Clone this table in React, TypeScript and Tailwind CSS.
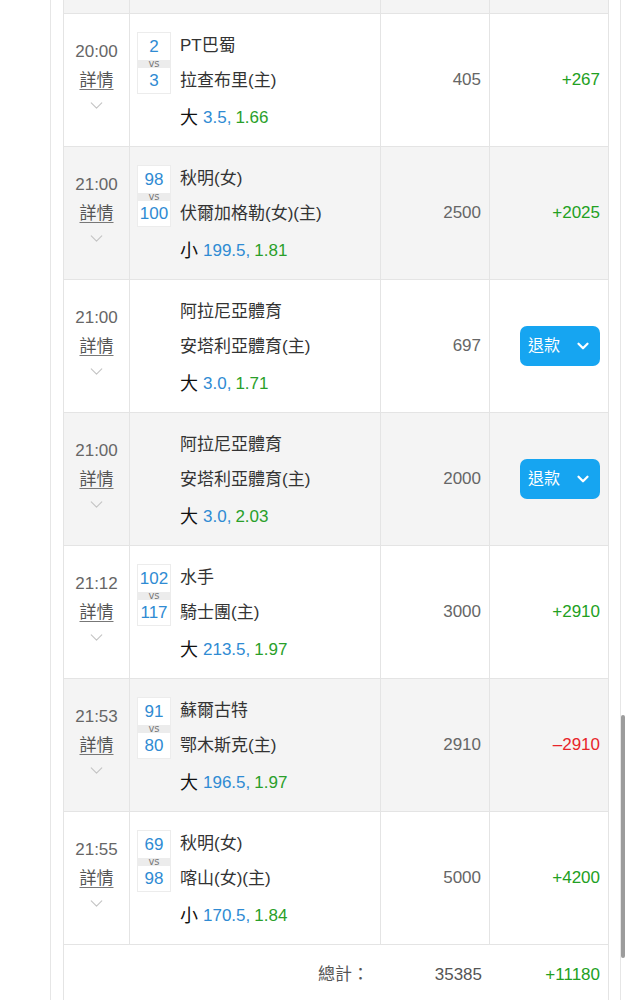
import { FC } from 'react';
import { ChevronDown } from 'lucide-react';

type Bet = {
  time: string;
  home?: string;
  away?: string;
  team1: string;
  team2: string;
  side: string;
  line: string;
  odds: string;
  stake: string;
  result?: string;
  refund?: boolean;
};

const bets: Bet[] = [
  { time: '20:00', home: '2', away: '3', team1: 'PT巴蜀', team2: '拉查布里(主)', side: '大', line: '3.5', odds: '1.66', stake: '405', result: '+267' },
  { time: '21:00', home: '98', away: '100', team1: '秋明(女)', team2: '伏爾加格勒(女)(主)', side: '小', line: '199.5', odds: '1.81', stake: '2500', result: '+2025' },
  { time: '21:00', team1: '阿拉尼亞體育', team2: '安塔利亞體育(主)', side: '大', line: '3.0', odds: '1.71', stake: '697', refund: true },
  { time: '21:00', team1: '阿拉尼亞體育', team2: '安塔利亞體育(主)', side: '大', line: '3.0', odds: '2.03', stake: '2000', refund: true },
  { time: '21:12', home: '102', away: '117', team1: '水手', team2: '騎士團(主)', side: '大', line: '213.5', odds: '1.97', stake: '3000', result: '+2910' },
  { time: '21:53', home: '91', away: '80', team1: '蘇爾古特', team2: '鄂木斯克(主)', side: '大', line: '196.5', odds: '1.97', stake: '2910', result: '–2910' },
  { time: '21:55', home: '69', away: '98', team1: '秋明(女)', team2: '喀山(女)(主)', side: '小', line: '170.5', odds: '1.84', stake: '5000', result: '+4200' },
];

const cols = 'grid grid-cols-[66px_251px_109px_118px]';

const Row: FC<{ bet: Bet; shaded: boolean }> = ({ bet, shaded }) => (
  <div className={`${cols} h-[133px] border-b border-[#e4e4e4] ${shaded ? 'bg-[#f4f4f4]' : 'bg-white'}`}>
    <div className="flex flex-col items-center border-r border-[#e4e4e4] pt-[26px] text-[17px] text-[#666]">
      <div className="h-[24px] leading-[24px]">{bet.time}</div>
      <div className="mt-[5px] h-[24px] leading-[24px] text-[#555] underline underline-offset-[3px] decoration-[#777]">詳情</div>
      <ChevronDown className="mt-[2px] text-[#c4c4c4]" size={21} strokeWidth={1.3} />
    </div>
    <div className="flex border-r border-[#e4e4e4] pl-[7px]">
      <div className="mt-[18px] w-[34px] self-start">
        {bet.home && (
          <div className="flex flex-col border border-[#ececec] bg-white text-center text-[17px] text-[#2f8bd3]">
            <div className="h-[27px] leading-[28px]">{bet.home}</div>
            <div className="flex h-[8px] items-center justify-center overflow-visible bg-[#ececec] font-['DejaVu_Sans',sans-serif] text-[10px] leading-none text-[#7a7a7a]">vs</div>
            <div className="h-[25px] leading-[25px]">{bet.away}</div>
          </div>
        )}
      </div>
      <div className="ml-[9px] pt-[18px] text-[17px] text-[#333]">
        <div className="flex h-[28px] items-center">{bet.team1}</div>
        <div className="h-[8px]" />
        <div className="flex h-[26px] items-center">{bet.team2}</div>
        <div className="mt-[10px] flex h-[28px] items-center">
          <span className="mr-[5px] text-[18px] text-[#111]">{bet.side}</span>
          <span className="text-[#2f8bd3]">{bet.line},</span>
          <span className="ml-[4px] text-[#2a9f2a]">{bet.odds}</span>
        </div>
      </div>
    </div>
    <div className="flex items-center justify-end border-r border-[#e4e4e4] pr-[8px] text-[17px] text-[#666]">{bet.stake}</div>
    <div className="flex items-center justify-end pr-[8px] text-[17px]">
      {bet.refund ? (
        <button className="flex h-[40px] w-[80px] items-center rounded-[7px] bg-[#16a5f1] pl-[8px] text-[16px] text-white">
          <span>退款</span>
          <ChevronDown className="ml-[14px]" size={18} strokeWidth={3} />
        </button>
      ) : (
        <span className={bet.result?.startsWith('+') ? 'text-[#22a022]' : 'text-[#e8242a]'}>{bet.result}</span>
      )}
    </div>
  </div>
);

const App: FC = () => {
  return (
    <div className="relative h-[1000px] w-[630px] overflow-hidden bg-white font-['Liberation_Sans','Noto_Sans_CJK_TC',sans-serif]">
      <div className="ml-[50px] h-full w-[571px] border-l border-r border-[#e6e6e6] pl-[12px] pr-[11px]">
        <div className="w-[546px] border-l border-r border-[#e4e4e4]">
          <div className={`${cols} h-[14px] border-b border-[#e4e4e4] bg-[#f4f4f4]`}>
            <div className="border-r border-[#e4e4e4]" />
            <div className="border-r border-[#e4e4e4]" />
            <div className="border-r border-[#e4e4e4]" />
            <div />
          </div>
          {bets.map((bet, i) => (
            <Row key={i} bet={bet} shaded={i % 2 === 1} />
          ))}
          <div className={`${cols} h-[60px] bg-white text-[17px] text-[#555]`}>
            <div />
            <div className="flex items-center justify-end pr-[12px]">總計：</div>
            <div className="flex items-center justify-end pr-[8px]">35385</div>
            <div className="flex items-center justify-end pr-[8px] text-[#22a022]">+11180</div>
          </div>
        </div>
      </div>
      <div className="absolute left-[621px] top-[715px] h-[243px] w-[4px] rounded-full bg-[#9c9c9c]" />
    </div>
  );
};

export default App;
